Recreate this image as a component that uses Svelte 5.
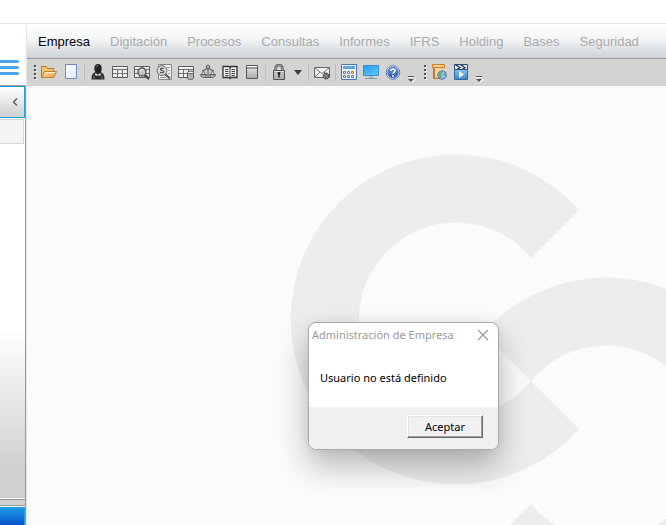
<script>
  const menus = ['Empresa', 'Digitación', 'Procesos', 'Consultas', 'Informes', 'IFRS', 'Holding', 'Bases', 'Seguridad'];
  const tools = [
    { kind: 'grip' },
    { kind: 'folder', label: 'Abrir' },
    { kind: 'page', label: 'Nuevo' },
    { kind: 'sep' },
    { kind: 'user', label: 'Usuario' },
    { kind: 'table', label: 'Tabla' },
    { kind: 'tablesearch', label: 'Buscar en tabla' },
    { kind: 'money', label: 'Buscar saldo' },
    { kind: 'tabledata', label: 'Datos' },
    { kind: 'scales', label: 'Balance' },
    { kind: 'book', label: 'Libro' },
    { kind: 'window', label: 'Ventana' },
    { kind: 'sep' },
    { kind: 'lock', label: 'Bloquear' },
    { kind: 'arrow', label: 'Opciones de bloqueo' },
    { kind: 'sep' },
    { kind: 'mail', label: 'Correo' },
    { kind: 'sep' },
    { kind: 'calc', label: 'Calculadora' },
    { kind: 'monitor', label: 'Pantalla' },
    { kind: 'help', label: 'Ayuda' },
    { kind: 'more', label: 'Más botones' },
    { kind: 'grip' },
    { kind: 'webfolder', label: 'Carpeta web' },
    { kind: 'video', label: 'Videos' },
    { kind: 'more', label: 'Más opciones' }
  ];
  let open = $state(true);
</script>

{#snippet icon(kind)}
  <svg viewBox="0 0 16 16" width="16" height="16" aria-hidden="true">
    {#if kind === 'folder'}
      <path d="M.5 13.500v-11h5l1 2h6v3" fill="#f2c473" stroke="#b87a20" />
      <path d="M.7 13.500 3.500 7.500h12l-2.700 6z" fill="url(#gold)" stroke="#bf8229" />
      <path d="M4 8.500h10" stroke="#fff0cd" />
    {:else if kind === 'page'}
      <path d="M2.500.5h11v14h-11z" fill="url(#paper)" stroke="#7189bd" />
    {:else if kind === 'user'}
      <path d="M1.500 15.500c-.2-4 1-6.500 4-7.500h5c3 1 4.200 3.500 4 7.500z" fill="#292929" />
      <path d="M4.300 4.500c0-6 7.700-5.800 7.400 0 .2 3-1.700 5-3.700 5s-3.700-2-3.700-5z" fill="#202020" />
      <path d="M5.500 9 8 10.500 10.500 9l.8 2-2 1.200L8 11l-1.300 1.200L4.700 11z" fill="#c4c4c4" />
      <path d="M6 3.500c.5-1.300 1.500-1.800 2.300-1.700M4 12v3M12 12v3" stroke="#888" fill="none" />
    {:else if kind === 'table' || kind === 'tablesearch' || kind === 'tabledata'}
      <path d="M.5 2.500h15v11H.5z" fill="#ececec" stroke="#5c5c5c" />
      <path d="M1 5.500h14M1 9.500h14M5.500 5.500v8M10.500 5.500v8" stroke="#707070" fill="none" />
      <path d="M1 3.500h14" stroke="#fafafa" />
      {#if kind === 'tablesearch'}
        <path d="m10.500 10.500 4.500 4.500" stroke="#4f4f4f" stroke-width="2.500" />
        <circle cx="8" cy="8" r="4" fill="#c4c4c4" stroke="#4d4d4d" stroke-width="1.300" />
        <path d="M5.900 7.200c.7-1.700 2.300-2 3.600-1" stroke="#fff" fill="none" />
      {:else if kind === 'tabledata'}
        <path d="M9.500 8.500V14c0 2 6 2 6 0V8.500" fill="#b4b4b4" stroke="#5c5c5c" />
        <ellipse cx="12.500" cy="8.500" rx="3" ry="1.300" fill="#eee" stroke="#5c5c5c" />
      {/if}
    {:else if kind === 'money'}
      <path d="M2.500.5h13v15h-13z" fill="#f1f1f1" stroke="#888" />
      <path d="M11 3.500h3M12 6.500h2M12 9.500h2M4 13.500h6" stroke="#999" />
      <path d="m9 10 5 4.500" stroke="#555" stroke-width="2.300" />
      <circle cx="6" cy="6.500" r="4.900" fill="#dedede" stroke="#666" />
      <path d="M8 4.700c-3.500-1.500-4.700 1-2 1.800s2.200 3-2 1.800" fill="none" stroke="#555" stroke-width="1.300" />
    {:else if kind === 'scales'}
      <path d="M8 2v11M2 7c3 0 3-2.500 6-2.500S11 7 14 7M5 13.500h6" stroke="#606060" stroke-width="1.200" fill="none" />
      <path d="M3.500 7 1 11h5zM12.500 7 10 11h5z" stroke="#777" fill="none" />
      <path d="M.5 10.500h6c-.4 4-5.600 4-6 0zm9 0h6c-.4 4-5.600 4-6 0z" fill="#a8a8a8" stroke="#5c5c5c" />
      <circle cx="8" cy="3" r="1.800" fill="#b5b5b5" stroke="#555" />
    {:else if kind === 'book'}
      <path d="M1 2.500h6l1 1 1-1h6v11H9l-1 1-1-1H1z" fill="#f2f2f2" stroke="#303030" stroke-width="1.300" />
      <path d="M8 3.500v10.500M3 5.500h3.500M3 7.500h3.500M3 9.500h3.500M3 11.500h3.500M9.500 5.500H13M9.500 7.500H13M9.500 9.500H13M9.500 11.500H13" stroke="#494949" fill="none" />
    {:else if kind === 'window'}
      <path d="M2.500 1.500h11v13h-11z" fill="url(#metal)" stroke="#555" />
      <path d="M3 2.500h10" stroke="#fff" /><path d="M3 4h10" stroke="#555" />
    {:else if kind === 'lock'}
      <path d="M4.500 7V4.500c0-4.500 7-4.500 7 0V7" fill="none" stroke="#555" stroke-width="2.400" />
      <path d="M4.500 6V4.500c0-4.500 7-4.500 7 0V6" fill="none" stroke="#bbb" stroke-width=".8" />
      <path d="M2.500 6.500h11v9h-11z" fill="url(#metal)" stroke="#505050" />
      <path d="M3 8.500h10M3 10.500h10M3 12.500h10" stroke="#aaa" />
      <circle cx="8" cy="9.500" r="1.400" fill="#222" /><path d="M8 10v3.500" stroke="#222" stroke-width="1.500" />
    {:else if kind === 'arrow'}
      <path d="M4 6h8l-4 5z" fill="#3c3c3c" />
    {:else if kind === 'mail'}
      <path d="M.5 3.500h15v10H.5z" fill="#f1f1f1" stroke="#666" />
      <path d="m1 4 7 5.500L15 4M1 13l5-5M10 8l4 4" fill="none" stroke="#777" />
      <circle cx="12" cy="12" r="2.700" fill="#aaa" stroke="#3f3f3f" stroke-width="1.500" stroke-dasharray="1.500 .6" />
      <circle cx="12" cy="12" r="1.200" fill="#fff" stroke="#444" />
    {:else if kind === 'calc'}
      <path d="M.5.5h15v15H.5z" fill="#eef4fc" stroke="#4b75b4" />
      <path d="M2 2h12v3H2z" fill="#5ca5df" />
      <path d="M2.500 7.500h2v2h-2zM6.500 7.500h2v2h-2zM2.500 11.500h2v2h-2zM6.500 11.500h2v2h-2zM10.500 11.500h2v2h-2z" fill="#fff" stroke="#5e77a5" />
      <path d="M10.500 7.500h2v2h-2z" fill="#ffc561" stroke="#d8791d" />
    {:else if kind === 'monitor'}
      <path d="M.5 1.500h15v10H.5z" fill="url(#screen)" stroke="#3b8fc9" />
      <path d="M6 12h4v2H6z" fill="#acbac5" /><path d="M2 14.500h12" stroke="#8798a7" />
    {:else if kind === 'help'}
      <circle cx="8" cy="8.500" r="6.800" fill="#e9eff9" stroke="#597ab9" />
      <circle cx="8" cy="8.500" r="5.200" fill="url(#round)" stroke="#4168b4" />
      <path d="M6 7c0-3 4.300-2.400 4-.2-.1 1.500-2 1.400-2 3" fill="none" stroke="#fff" stroke-width="1.500" />
      <circle cx="8" cy="11.900" r="1" fill="#fff" />
    {:else if kind === 'more'}
      <path d="M5 13.500h6M6 15.500h6l-3 3z" fill="#fff" stroke="#fff" /><path d="M5 12.500h6" stroke="#555" />
      <path d="M5 15h6l-3 3z" fill="#555" />
    {:else if kind === 'webfolder'}
      <path d="M2.500 1.500h10v13h-10z" fill="url(#gold)" stroke="#bf7424" />
      <path d="M1.500.5h12v3h-12zM3.500 3v11" fill="#fbd38e" stroke="#c87f2e" />
      <path d="M4.500 4.500h9v9h-9z" fill="#fbd79f" />
      <circle cx="11" cy="11" r="4.200" fill="#8cc3ee" stroke="#446da0" />
      <path d="M8 9c1.500-1.600 3-1.300 3.200-.2l-1.700 1.700 1.300 2-1.300 1.500C7.500 12.500 7.500 10.500 8 9zM12 10l2.500-.5v3z" fill="#6ba85a" />
    {:else if kind === 'video'}
      <path d="M1.500 5.500h13v10h-13z" fill="url(#film)" stroke="#3764a2" />
      <path d="M1.500.5h13v5h-13z" fill="#edf3f9" stroke="#334568" />
      <path d="m2 1 2.500 2H7L4.500 1zm5 0 2.500 2H12L9.500 1zM4 5l2-2h2.500l-2 2zm5 0 2-2h2.500l-2 2z" fill="#263b63" />
      <path d="m6 7 5 3.500L6 14z" fill="#fff" />
    {/if}
  </svg>
{/snippet}

<svg class="defs" width="0" height="0" aria-hidden="true">
  <defs>
    <linearGradient id="gold" x2="1" y2="1"><stop stop-color="#ffe7b3" /><stop offset="1" stop-color="#e69b3c" /></linearGradient>
    <linearGradient id="paper" x2="1" y2="1"><stop stop-color="#fff" /><stop offset="1" stop-color="#dce7fb" /></linearGradient>
    <linearGradient id="metal" x2="0" y2="1"><stop stop-color="#eee" /><stop offset="1" stop-color="#a9a9a9" /></linearGradient>
    <linearGradient id="screen" x2="1" y2="1"><stop stop-color="#249ee9" /><stop offset="1" stop-color="#5ec9ff" /></linearGradient>
    <linearGradient id="round" x2="0" y2="1"><stop stop-color="#7d9fdd" /><stop offset="1" stop-color="#2453ae" /></linearGradient>
    <linearGradient id="film" x2="0" y2="1"><stop stop-color="#8ac5ee" /><stop offset="1" stop-color="#3a85c9" /></linearGradient>
  </defs>
</svg>

<div class="app">
  <div class="caption"></div>
  <div class="body">
    <aside>
      <div class="brand">
        <button class="burger" aria-label="Menú"><i></i><i></i><i></i></button>
      </div>
      <div class="panel">
        <button class="collapse" aria-label="Contraer panel">
          <svg viewBox="0 0 6 8" width="6" height="8" aria-hidden="true"><path d="M5 .500 1.500 4 5 7.500" fill="none" stroke="#555" stroke-width="1.300" /></svg>
        </button>
        <div class="filter"></div>
        <div class="tree"></div>
        <div class="splitter"></div>
        <button class="module" aria-label="Módulo activo"></button>
      </div>
    </aside>
    <div class="work">
      <nav>
        {#each menus as name, i}
          <button class:active={i === 0}>{name}</button>
        {/each}
      </nav>
      <div class="toolbar" role="toolbar" aria-label="Herramientas">
        {#each tools as tool}
          {#if tool.kind === 'grip'}
            <span class="grip"><i></i><i></i><i></i><i></i></span>
          {:else if tool.kind === 'sep'}
            <span class="sep"></span>
          {:else}
            <button class={tool.kind} aria-label={tool.label}>{@render icon(tool.kind)}</button>
          {/if}
        {/each}
      </div>
      <main>
        <svg class="mark" viewBox="0 0 482 566" width="482" height="566" aria-hidden="true">
          <g fill="#ecedef">
            <path d="M288 56A165 165 0 1 0 288 275L240 227A97 97 0 1 1 240 104Z" />
            <path d="M192 179A165 165 0 1 1 192 398L240 350A97 97 0 1 0 240 227Z" />
          </g>
        </svg>
        {#if open}
          <div class="dialog" role="alertdialog" aria-labelledby="dlg-title" aria-describedby="dlg-text">
            <header>
              <h1 id="dlg-title">Administración de Empresa</h1>
              <button class="close" aria-label="Cerrar" onclick={() => (open = false)}>
                <svg viewBox="0 0 12 12" width="12" height="12" aria-hidden="true"><path d="m1 1 10 10M11 1 1 11" stroke="#999" stroke-width="1.100" /></svg>
              </button>
            </header>
            <p id="dlg-text">Usuario no está definido</p>
            <footer><button class="accept" onclick={() => (open = false)}>Aceptar</button></footer>
          </div>
        {/if}
      </main>
    </div>
  </div>
</div>

<style>
  :global(body) { margin: 0; background: #fff; }
  button { margin: 0; padding: 0; border: 0; background: none; font: inherit; color: inherit; }
  .defs { position: absolute; }
  .app { display: flex; flex-direction: column; height: 100vh; overflow: hidden; font-family: "Liberation Sans", Arial, sans-serif; }
  .caption { flex: 0 0 23px; border-bottom: 1px solid #ebebeb; }
  .body { flex: 1; display: flex; min-height: 0; }
  aside { flex: 0 0 26px; display: flex; flex-direction: column; }
  .brand { flex: 0 0 61px; display: flex; align-items: flex-end; padding-bottom: 10px; box-sizing: border-box; }
  .burger { display: flex; flex-direction: column; gap: 3px; width: 19px; }
  .burger i { height: 3px; background: #4da3ec; border-radius: 0 2px 2px 0; }
  .panel { flex: 1; display: flex; flex-direction: column; border-right: 1px solid #999; border-top: 1px solid #999; }
  .collapse { box-sizing: border-box; height: 32px; border: 1px solid #1ba1e2; border-left: 0; display: flex; align-items: center; justify-content: flex-end; padding-right: 6px; background: linear-gradient(#fff, #cfcfcf); }
  .filter { box-sizing: border-box; height: 25px; margin: 1px 1px 0 0; background: #f5f5f5; border: 1px solid #d7d7d7; border-left: 0; }
  .tree { flex: 1; background: linear-gradient(#fff 52%, #d0d0d0 92%); }
  .splitter { height: 5px; margin: 1px 0; background: #d0d0d0; border-top: 1px solid #999; border-bottom: 1px solid #999; box-shadow: 0 -1px #fff, 0 1px #fff; }
  .module { box-sizing: border-box; height: 18px; border-right: 1px solid #1ba1e2; background: linear-gradient(#1ca0e6, #0a50cd); }
  .work { flex: 1; display: flex; flex-direction: column; min-width: 0; border-left: 1px solid #e6e6e6; }
  nav { display: flex; align-items: center; gap: 20px; height: 34px; padding-left: 11px; background: linear-gradient(#fff, #f3f5f6 45%, #ccd2d7); border-bottom: 1px solid #999; font-size: 13px; color: #aaa; }
  nav .active { color: #000; }
  .toolbar { display: flex; align-items: center; box-sizing: border-box; height: 27px; padding: 0 0 1px 1px; background: #d3d3d3; }
  .toolbar button { width: 22px; height: 22px; display: flex; align-items: center; justify-content: center; }
  .toolbar svg { flex: none; overflow: visible; }
  .toolbar .arrow { width: 16px; }
  .toolbar .more { width: 14px; }
  .grip { display: flex; flex-direction: column; gap: 2px; width: 4px; padding-left: 6px; }
  .grip i { width: 2px; height: 2px; background: #505050; box-shadow: 1px 1px #f2f2f2; }
  .sep { width: 1px; height: 17px; margin: 0 2px; background: #b5bec9; }
  main { position: relative; flex: 1; overflow: hidden; background: #fbfbfb; }
  .mark { position: absolute; left: 264px; top: 68px; overflow: visible; }
  .dialog { position: absolute; left: 281px; top: 236px; width: 189px; border: 1px solid #aaa; border-radius: 8px; background: #fff; font-family: "Noto Sans", "Open Sans", sans-serif; box-shadow: 0 16px 32px rgba(0, 0, 0, .28), 0 0 10px rgba(0, 0, 0, .06); }
  header { display: flex; align-items: center; justify-content: space-between; height: 24px; padding: 0 9px 0 3px; }
  h1 { margin: 0; font-size: 11px; font-weight: 400; line-height: 16px; color: #999; white-space: nowrap; }
  .close { display: flex; }
  p { margin: 0; padding: 23px 11px 21px; font-size: 11px; line-height: 16px; color: #000; }
  footer { display: flex; justify-content: flex-end; padding: 8px 15px 11px; background: #f0f0f0; border-radius: 0 0 7px 7px; }
  .accept { box-sizing: border-box; width: 76px; height: 23px; font-size: 11px; line-height: 16px; background: #f0f0f0; border: 1px solid; border-color: #fff #696969 #696969 #fff; box-shadow: inset -1px -1px #a0a0a0, inset 1px 1px #e3e3e3; }
</style>
